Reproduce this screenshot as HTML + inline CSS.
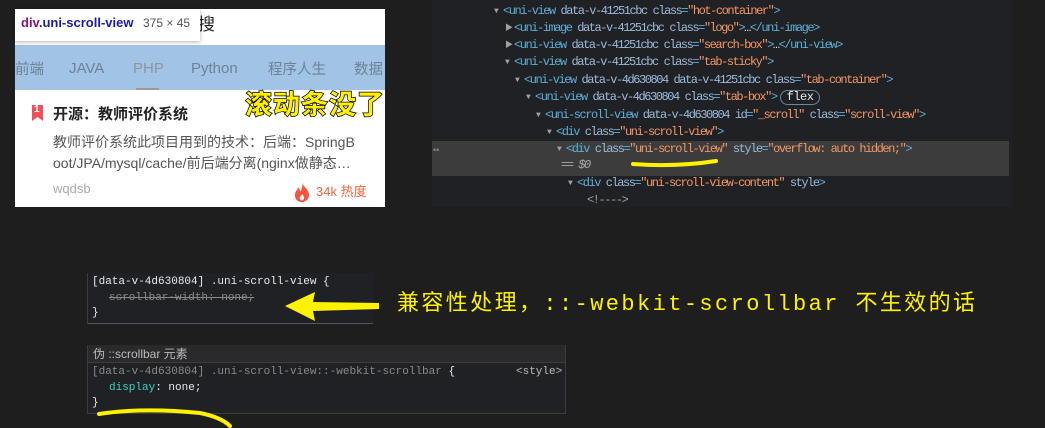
<!DOCTYPE html>
<html><head><meta charset="utf-8"><style>
*{margin:0;padding:0;box-sizing:border-box}
body{width:1045px;height:428px;background:#1e1e1e;position:relative;overflow:hidden;font-family:"Liberation Sans","Noto Sans CJK SC",sans-serif}
.a{position:absolute;white-space:nowrap}
.dt{font-family:"Liberation Mono","Noto Sans CJK SC",monospace;font-size:12px;letter-spacing:-1.45px;color:#5db0d7;line-height:17px}
.n{color:#9bbbdc}.v{color:#f29766}.w{color:#e8eaed}
.tri{display:inline-block;width:9px;color:#a0a0a0;font-size:8px;letter-spacing:0;vertical-align:1px}
.cs{font-family:"Liberation Mono","Noto Sans CJK SC",monospace;font-size:11px;line-height:16px;color:#e8eaed}
</style></head><body>
<!-- phone panel -->
<div class="a" style="left:15px;top:9px;width:370px;height:198px;background:#fff"></div>
<div class="a" style="left:198px;top:10px;font-size:17px;color:#222">搜</div>
<div class="a" style="left:15px;top:45px;width:370px;height:45px;background:#a0c3e6"></div>
<div class="a" style="left:15px;top:58px;font-size:14.5px;color:#6e8295">前端</div>
<div class="a" style="left:69px;top:60px;font-size:15px;color:#6e8295">JAVA</div>
<div class="a" style="left:133px;top:60px;font-size:15px;color:#8e959c">PHP</div>
<div class="a" style="left:191px;top:60px;font-size:15px;color:#6e8295">Python</div>
<div class="a" style="left:268px;top:58px;font-size:14.5px;color:#6e8295">程序人生</div>
<div class="a" style="left:354px;top:58px;font-size:14.5px;color:#6e8295">数据</div>
<div class="a" style="left:136px;top:88px;width:23px;height:2px;background:#999"></div>
<div class="a" style="left:32px;top:105px;width:11px;height:16px;background:#f0505a;clip-path:polygon(0 0,100% 0,100% 100%,50% 75%,0 100%)"></div>
<div class="a" style="left:34px;top:104px;font-size:10px;font-weight:bold;color:#fff">1</div>
<div class="a" style="left:53px;top:103px;font-size:15px;font-weight:bold;color:#222">开源：教师评价系统</div>
<div class="a" style="left:53px;top:132px;font-size:14px;color:#555;line-height:21px">教师评价系统此项目用到的技术：后端：SpringB<br>oot/JPA/mysql/cache/前后端分离(nginx做静态…</div>
<div class="a" style="left:53px;top:181px;font-size:13px;color:#aaa">wqdsb</div>
<svg class="a" style="left:294px;top:182px" width="16" height="20" viewBox="0 0 16 20"><path d="M8 0C9 5 16 8 15 14C14 19 10 20 8 20C4 20 1 18 1 13C1 9 4 8 4 5C6 7 6 9 6 10C8 7 9 4 8 0Z" fill="#f5553c"/><path d="M8 12C10 14 11 16 9 18C7 19 5 17 6 15C7 14 8 13 8 12Z" fill="#fff"/></svg>
<div class="a" style="left:316px;top:181px;font-size:13px;color:#f0643c">34k 热度</div>
<div class="a" style="left:15px;top:9px;width:185px;height:32px;background:#fff;box-shadow:0 1px 4px rgba(0,0,0,.3)"></div>
<div class="a" style="left:21px;top:15px;font-size:13px;font-weight:bold;color:#881280">div<span style="color:#1a1aa6">.uni-scroll-view</span></div>
<div class="a" style="left:143px;top:16px;font-size:12px;color:#555">375 × 45</div>
<div class="a" style="left:245px;top:83px;font-size:27px;font-weight:bold;color:#ffef00;-webkit-text-stroke:1.5px #000;paint-order:stroke fill;letter-spacing:1px">滚动条没了</div>
<!-- devtools -->
<div class="a" style="left:432px;top:0;width:580px;height:207px;background:#202124"></div>
<div class="a" style="left:432px;top:141px;width:577px;height:35px;background:#3c3c3c"></div>
<div class="a" style="left:433px;top:145px;font-size:9px;color:#888">••</div>
<div class="a dt" style="left:494px;top:3px"><span class="tri">▼</span>&lt;uni-view <span class="n">data-v-41251cbc</span> <span class="n">class</span>=<span class="v">"hot-container"</span>&gt;</div>
<div class="a dt" style="left:505px;top:20px"><span class="tri">▶</span>&lt;uni-image <span class="n">data-v-41251cbc</span> <span class="n">class</span>=<span class="v">"logo"</span>&gt;<span class="w">…</span>&lt;/uni-image&gt;</div>
<div class="a dt" style="left:505px;top:37px"><span class="tri">▶</span>&lt;uni-view <span class="n">data-v-41251cbc</span> <span class="n">class</span>=<span class="v">"search-box"</span>&gt;<span class="w">…</span>&lt;/uni-view&gt;</div>
<div class="a dt" style="left:505px;top:54px"><span class="tri">▼</span>&lt;uni-view <span class="n">data-v-41251cbc</span> <span class="n">class</span>=<span class="v">"tab-sticky"</span>&gt;</div>
<div class="a dt" style="left:515px;top:72px"><span class="tri">▼</span>&lt;uni-view <span class="n">data-v-4d630804 data-v-41251cbc</span> <span class="n">class</span>=<span class="v">"tab-container"</span>&gt;</div>
<div class="a dt" style="left:526px;top:89px"><span class="tri">▼</span>&lt;uni-view <span class="n">data-v-4d630804</span> <span class="n">class</span>=<span class="v">"tab-box"</span>&gt;<span style="display:inline-block;margin-left:3px;padding:0 6px;border:1px solid #6a8aa0;border-radius:8px;line-height:13px;color:#e8eaed;letter-spacing:-0.5px">flex</span></div>
<div class="a dt" style="left:536px;top:107px"><span class="tri">▼</span>&lt;uni-scroll-view <span class="n">data-v-4d630804</span> <span class="n">id</span>=<span class="v">"_scroll"</span> <span class="n">class</span>=<span class="v">"scroll-view"</span>&gt;</div>
<div class="a dt" style="left:547px;top:124px"><span class="tri">▼</span>&lt;div <span class="n">class</span>=<span class="v">"uni-scroll-view"</span>&gt;</div>
<div class="a dt" style="left:557px;top:141px"><span class="tri">▼</span>&lt;div <span class="n">class</span>=<span class="v">"uni-scroll-view"</span> <span class="n">style</span>=<span class="v">"overflow: auto hidden;"</span>&gt;</div>
<div class="a dt" style="left:561px;top:157px;color:#aaa">== <i>$0</i></div>
<svg class="a" style="left:630px;top:156px" width="90" height="12"><path d="M3 8C30 10 60 9 86 5" stroke="#fff200" stroke-width="4" fill="none" stroke-linecap="round"/></svg>
<div class="a dt" style="left:568px;top:175px"><span class="tri">▼</span>&lt;div <span class="n">class</span>=<span class="v">"uni-scroll-view-content"</span> <span class="n">style</span>&gt;</div>
<div class="a dt" style="left:587px;top:192px;color:#a0a0a0">&lt;!----&gt;</div>
<!-- styles box 1 -->
<div class="a" style="left:87px;top:273px;width:286px;height:51px;background:#202124;border-left:1px solid #3c3c3c;border-bottom:1px solid #555"></div>
<div class="a cs" style="left:92px;top:274px">[data-v-4d630804] .uni-scroll-view {</div>
<div class="a cs" style="left:109px;top:290px;color:#8a8a8a;text-decoration:line-through">scrollbar-width: none;</div>
<div class="a cs" style="left:92px;top:305px">}</div>
<svg class="a" style="left:283px;top:290px" width="100" height="32"><path d="M2 16L32 2L30 12L96 13L96 19L30 21L32 31Z" fill="#fff200"/></svg>
<div class="a" style="left:397px;top:285px;font-size:22px;letter-spacing:2.4px;color:#fff200;font-family:'Liberation Mono','Noto Sans CJK SC',monospace">兼容性处理，::-webkit-scrollbar 不生效的话</div>
<!-- styles box 2 -->
<div class="a" style="left:87px;top:345px;width:479px;height:69px;background:#202124;border:1px solid #3c3c3c"></div>
<div class="a" style="left:88px;top:345px;width:477px;height:18px;background:#2a2a2c;border-bottom:1px solid #3c3c3c"></div>
<div class="a" style="left:93px;top:345px;font-size:12px;color:#bbb">伪 ::scrollbar 元素</div>
<div class="a cs" style="left:92px;top:364px;color:#8a8a8a">[data-v-4d630804] .uni-scroll-view::-webkit-scrollbar <span style="color:#e8eaed">{</span></div>
<div class="a cs" style="left:516px;top:364px;color:#bbb">&lt;style&gt;</div>
<div class="a cs" style="left:109px;top:380px"><span style="color:#35d4c7">display</span>: none;</div>
<div class="a cs" style="left:92px;top:395px">}</div>
<svg class="a" style="left:95px;top:405px" width="140" height="23"><path d="M4 9C30 5 65 4 105 8C120 11 130 16 135 21" stroke="#fff200" stroke-width="4" fill="none" stroke-linecap="round"/></svg>
</body></html>
